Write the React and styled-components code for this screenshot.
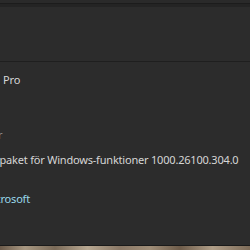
import styled, { createGlobalStyle } from "styled-components";

const GlobalStyle = createGlobalStyle`
  html, body {
    margin: 0;
    padding: 0;
    background: #2b2b2b;
    overflow: hidden;
  }
  body {
    font-family: "Noto Sans", "Open Sans", sans-serif;
    -webkit-font-smoothing: antialiased;
  }
`;

const Window = styled.div`
  width: 250px;
  height: 250px;
  display: flex;
  flex-direction: column;
  background: #2c2c2c;
  overflow: hidden;
`;

const TopEdge = styled.div`
  height: 7px;
  flex-shrink: 0;
  background: linear-gradient(
    to bottom,
    #2a2a2a 0px,
    #2a2a2a 3px,
    #1c1c1c 3px,
    #1c1c1c 4px,
    #242424 4px,
    #242424 7px
  );
`;

const Header = styled.div`
  height: 54px;
  flex-shrink: 0;
  border-bottom: 1px solid #1f1f1f;
`;

const Specs = styled.div`
  flex: 1;
  display: flex;
  flex-direction: column;
  padding-top: 10px;
`;

const Line = styled.div`
  font-size: 11px;
  line-height: 15px;
  letter-spacing: -0.2px;
  white-space: nowrap;
  text-indent: ${(p) => p.$indent}px;
  margin-top: ${(p) => p.$gap}px;
  color: ${(p) => (p.$muted ? "#8c8c8c" : "#d6d6d6")};
`;

const Link = styled.a`
  color: #99d8ea;
  text-decoration: none;
`;

const Wallpaper = styled.div`
  height: 4px;
  flex-shrink: 0;
  border-top: 1px solid #1a1a1a;
  background: linear-gradient(
    to right,
    #6b5a4a 0%,
    #a89882 10%,
    #7a6a58 22%,
    #b8a892 35%,
    #8a7866 48%,
    #a08e78 60%,
    #6e5c4a 72%,
    #b09e88 85%,
    #7d6b58 100%
  );
`;

export default function App() {
  return (
    <>
      <GlobalStyle />
      <Window>
        <TopEdge />
        <Header />
        <Specs>
          <Line $indent={-60} $gap={0}>Windows 11 Pro</Line>
          <Line $indent={-43} $gap={40} $muted>
            Nummer
          </Line>
          <Line $indent={-55} $gap={10}>
            Upplevelsepaket för Windows-funktioner 1000.26100.304.0
          </Line>
          <Line $indent={-17} $gap={24}>
            <Link href="#">Microsoft</Link>
          </Line>
        </Specs>
        <Wallpaper />
      </Window>
    </>
  );
}
